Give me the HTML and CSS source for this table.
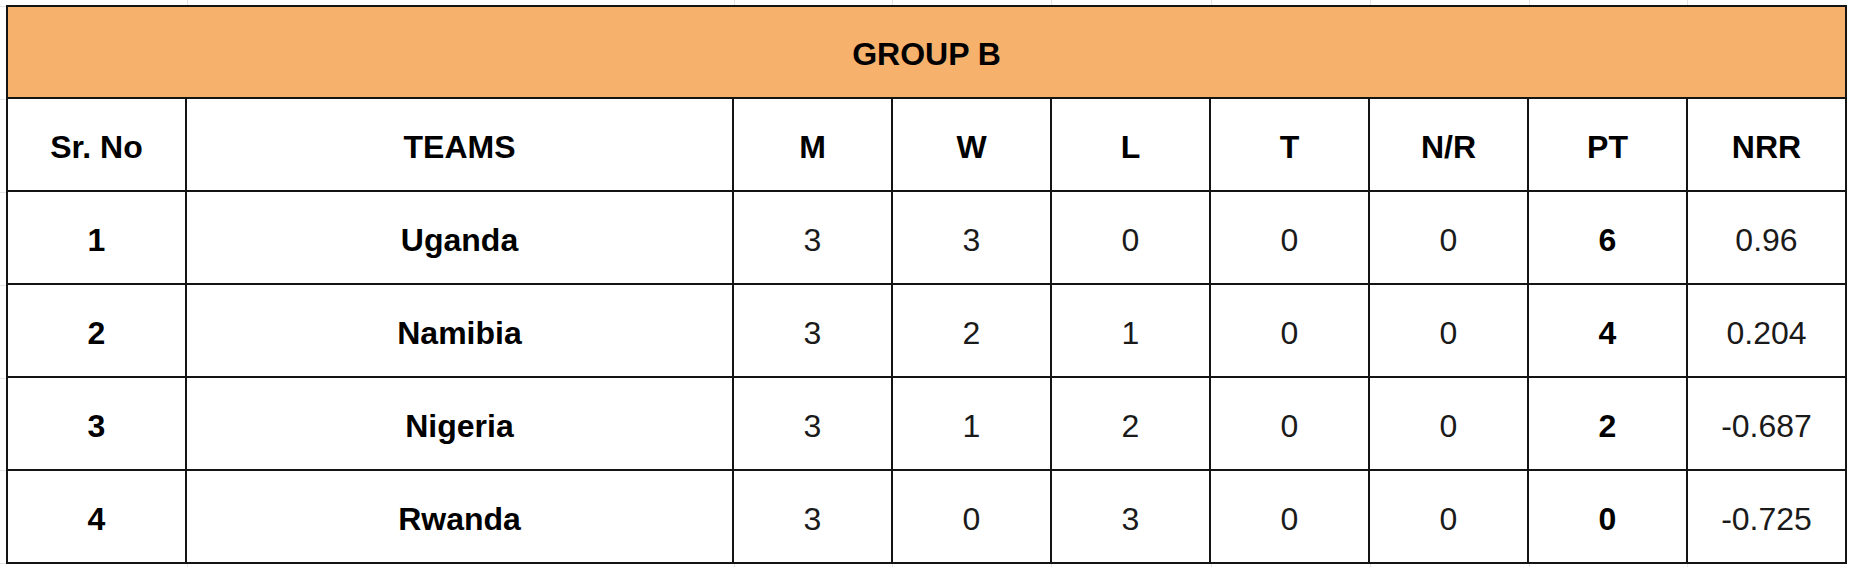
FILE: index.html
```html
<!DOCTYPE html>
<html>
<head>
<meta charset="utf-8">
<link rel="stylesheet" href="styles.css">
</head>
<body>
<div class="sheet">
<table class="standings">
  <colgroup>
    <col class="c-sr"><col class="c-team"><col class="c-num"><col class="c-num"><col class="c-num"><col class="c-num"><col class="c-num"><col class="c-num"><col class="c-num">
  </colgroup>
  <thead>
    <tr class="group-row"><th colspan="9">GROUP B</th></tr>
    <tr class="head-row">
      <th>Sr. No</th><th>TEAMS</th><th>M</th><th>W</th><th>L</th><th>T</th><th>N/R</th><th>PT</th><th>NRR</th>
    </tr>
  </thead>
  <tbody>
    <tr><td class="b">1</td><td class="b">Uganda</td><td>3</td><td>3</td><td>0</td><td>0</td><td>0</td><td class="b">6</td><td>0.96</td></tr>
    <tr><td class="b">2</td><td class="b">Namibia</td><td>3</td><td>2</td><td>1</td><td>0</td><td>0</td><td class="b">4</td><td>0.204</td></tr>
    <tr><td class="b">3</td><td class="b">Nigeria</td><td>3</td><td>1</td><td>2</td><td>0</td><td>0</td><td class="b">2</td><td>-0.687</td></tr>
    <tr><td class="b">4</td><td class="b">Rwanda</td><td>3</td><td>0</td><td>3</td><td>0</td><td>0</td><td class="b">0</td><td>-0.725</td></tr>
  </tbody>
</table>
</div>
</body>
</html>
```
FILE: styles.css
```css
html, body {
  margin: 0;
  padding: 0;
  background: #ffffff;
}

body {
  width: 1849px;
  height: 567px;
  overflow: hidden;
  font-family: "Liberation Sans", Arial, sans-serif;
  color: #000;
  /* faint spreadsheet gridlines outside the table */
  background-image:
    linear-gradient(#e4e4e4, #e4e4e4),
    linear-gradient(#e4e4e4, #e4e4e4),
    linear-gradient(#e4e4e4, #e4e4e4),
    linear-gradient(#e4e4e4, #e4e4e4),
    linear-gradient(#e4e4e4, #e4e4e4),
    linear-gradient(#e4e4e4, #e4e4e4),
    linear-gradient(#e4e4e4, #e4e4e4),
    linear-gradient(#e4e4e4, #e4e4e4),
    linear-gradient(#e4e4e4, #e4e4e4),
    linear-gradient(#e4e4e4, #e4e4e4),
    linear-gradient(#e4e4e4, #e4e4e4),
    linear-gradient(#e4e4e4, #e4e4e4),
    linear-gradient(#e4e4e4, #e4e4e4),
    linear-gradient(#e4e4e4, #e4e4e4),
    linear-gradient(#e4e4e4, #e4e4e4),
    linear-gradient(#e4e4e4, #e4e4e4),
    linear-gradient(#e4e4e4, #e4e4e4),
    linear-gradient(#e4e4e4, #e4e4e4),
    linear-gradient(#e4e4e4, #e4e4e4),
    linear-gradient(#e4e4e4, #e4e4e4),
    linear-gradient(#e4e4e4, #e4e4e4),
    linear-gradient(#e4e4e4, #e4e4e4),
    linear-gradient(#e4e4e4, #e4e4e4);
  background-repeat: no-repeat;
  background-size:
    1px 5px, 1px 5px, 1px 5px, 1px 5px, 1px 5px, 1px 5px, 1px 5px, 1px 5px,
    1px 5px, 1px 5px, 1px 5px, 1px 5px, 1px 5px, 1px 5px, 1px 5px, 1px 5px,
    6px 1px, 6px 1px, 6px 1px, 6px 1px, 6px 1px, 6px 1px, 6px 1px;
  background-position:
    187px 0, 734px 0, 892px 0, 1051px 0, 1211px 0, 1370px 0, 1529px 0, 1687px 0,
    187px 563px, 734px 563px, 892px 563px, 1051px 563px, 1211px 563px, 1370px 563px, 1529px 563px, 1687px 563px,
    0 99px, 0 192px, 0 285px, 0 378px, 0 470px, 0 563px, 0 6px;
}

.sheet {
  padding: 5px 0 0 6px;
}

.standings {
  border-collapse: collapse;
  table-layout: fixed;
  width: 1840px;
  border: 2px solid #141414;
}

.c-sr { width: 179px; }
.c-team { width: 547px; }
.c-num { width: 159px; }

.standings th,
.standings td {
  border: 2px solid #141414;
  padding: 4px 0 0 0;
  text-align: center;
  vertical-align: middle;
  font-size: 32px;
  line-height: 36px;
  color: #1a1a1a;
}

.standings th {
  font-weight: bold;
  color: #000;
}

.group-row th {
  background: #f6b16c;
  height: 86px;
}

.head-row th {
  height: 87px;
}

.standings tbody td {
  height: 87px;
  font-weight: normal;
}

.standings tbody td.b {
  font-weight: bold;
  color: #000;
}
```
